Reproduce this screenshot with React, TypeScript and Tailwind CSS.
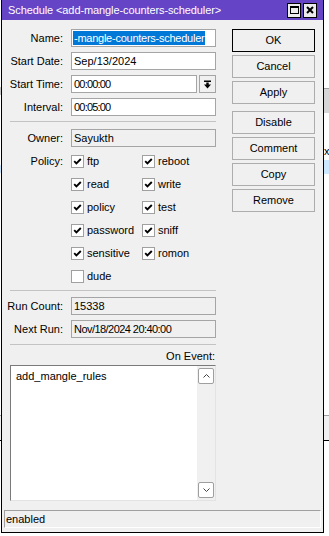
const font = { fontFamily: '"Liberation Sans", Arial, sans-serif' };

const Field = ({ value, readOnly = false, className = "" }: { value: string; readOnly?: boolean; className?: string }) => (
  <div
    className={`h-[18px] flex items-center px-[2px] border border-[#a5a5a5] text-[11px] text-black overflow-hidden whitespace-nowrap ${
      readOnly ? "bg-[#f0f0f0]" : "bg-white"
    } ${className}`}
  >
    {value}
  </div>
);

const Row = ({ label, children, className = "" }: { label: string; children: React.ReactNode; className?: string }) => (
  <div className={`flex items-center ${className}`}>
    <div className="w-[60px] text-right text-[11px] text-black pr-[1px]">{label}</div>
    <div className="ml-[7px] w-[145px]">{children}</div>
  </div>
);

const Check = ({ label, checked = true }: { label: string; checked?: boolean }) => (
  <div className="flex items-center h-[23px]">
    <div className="w-[13px] h-[13px] border border-[#a0a0a0] bg-white flex items-center justify-center">
      {checked && (
        <svg width="9" height="9" viewBox="0 0 9 9">
          <path d="M1.2 4.2 L3.4 6.4 L7.8 2" fill="none" stroke="#000" strokeWidth="1.9" />
        </svg>
      )}
    </div>
    <span className="ml-[3px] text-[11px] text-black">{label}</span>
  </div>
);

const Btn = ({ label, primary = false }: { label: string; primary?: boolean }) => (
  <div
    className={`h-[23px] w-[83px] flex items-center justify-center text-[11px] text-black bg-[#f0f0f0] border ${
      primary ? "border-black" : "border-[#adadad]"
    }`}
  >
    {label}
  </div>
);

const Sep = ({ className = "" }: { className?: string }) => (
  <div className={`ml-[6px] w-[206px] h-px bg-[#c3c3c3] ${className}`} />
);

export default function App() {
  return (
    <div className="flex w-[329px] h-[536px] bg-white overflow-hidden" style={font}>
      <div className="w-[1px] relative">
        <div className="absolute top-[87px] left-0 w-[1px] h-[8px] bg-[#c8c8c8]" />
        <div className="absolute top-[165px] left-0 w-[1px] h-[8px] bg-[#cce8ff]" />
        <div className="absolute top-[415px] left-0 w-[1px] h-[26px] border-t border-[#a0a0a0] border-b-black border-b bg-[#f0f0f0]" />
      </div>

      <div className="w-[323px] h-[533px] border-l border-r border-b border-black flex flex-col bg-[#f0f0f0]">
        <div className="h-[20px] bg-[#6544c6] flex items-center pl-[6px] pr-[6px]">
          <span className="text-white text-[11px] tracking-[-0.1px] whitespace-nowrap">Schedule &lt;add-mangle-counters-scheduler&gt;</span>
          <div className="ml-auto flex gap-[2px]">
            <div className="w-[14px] h-[15px] bg-[#ececec] border border-black flex items-center justify-center">
              <div className="w-[9px] h-[8px] border border-black border-t-2" />
            </div>
            <div className="w-[14px] h-[15px] bg-[#ececec] border border-black flex items-center justify-center">
              <svg width="8" height="8" viewBox="0 0 8 8">
                <path d="M1 1 L7 7 M7 1 L1 7" stroke="#000" strokeWidth="2" />
              </svg>
            </div>
          </div>
        </div>

        <div className="flex pt-[9px] pl-[2px]">
          <div className="w-[214px] flex flex-col">
            <Row label="Name:">
              <div className="h-[18px] flex items-center px-[1px] border border-[#a5a5a5] bg-white overflow-hidden whitespace-nowrap">
                <span className="bg-[#0078d7] text-white text-[11px] tracking-[-0.25px] leading-[14px] px-[1px]">-mangle-counters-scheduler</span>
              </div>
            </Row>
            <Row label="Start Date:" className="mt-[5px]">
              <Field value="Sep/13/2024" />
            </Row>
            <Row label="Start Time:" className="mt-[5px]">
              <div className="flex gap-[2px]">
                <Field value="00:00:00" className="flex-1 tracking-[-0.8px]" />
                <div className="w-[17px] h-[18px] border border-[#a5a5a5] bg-[#f0f0f0] flex items-center justify-center">
                  <svg width="9" height="9" viewBox="0 0 9 9">
                    <rect x="1" y="0.5" width="7" height="1.5" fill="#000" />
                    <rect x="3.3" y="2.5" width="2.4" height="2.5" fill="#000" />
                    <path d="M1 4.5 H8 L4.5 8.5 Z" fill="#000" />
                  </svg>
                </div>
              </div>
            </Row>
            <Row label="Interval:" className="mt-[5px]">
              <Field value="00:05:00" className="tracking-[-0.8px]" />
            </Row>
            <Sep className="mt-[5px]" />
            <Row label="Owner:" className="mt-[7px]">
              <Field value="Sayukth" readOnly />
            </Row>

            <div className="flex mt-[3px]">
              <div className="w-[60px] text-right text-[11px] text-black pr-[1px] h-[23px] leading-[23px]">Policy:</div>
              <div className="ml-[7px] grid grid-cols-[71px_1fr] w-[145px]">
                <Check label="ftp" />
                <Check label="reboot" />
                <Check label="read" />
                <Check label="write" />
                <Check label="policy" />
                <Check label="test" />
                <Check label="password" />
                <Check label="sniff" />
                <Check label="sensitive" />
                <Check label="romon" />
                <Check label="dude" checked={false} />
              </div>
            </div>

            <Sep className="mt-[2px]" />
            <Row label="Run Count:" className="mt-[6px]">
              <Field value="15338" readOnly />
            </Row>
            <Row label="Next Run:" className="mt-[5px]">
              <Field value="Nov/18/2024 20:40:00" readOnly className="tracking-[-0.55px]" />
            </Row>
            <Sep className="mt-[6px]" />
            <div className="mt-[4px] h-[14px] flex items-center justify-end pr-[1px] text-[11px] text-black w-[212px]">
              On Event:
            </div>
            <div className="mt-[2px] ml-[6px] w-[206px] h-[136px] flex bg-white border-t border-l border-[#7a7a7a] border-r border-r-[#e3e3e3] border-b border-b-[#e3e3e3]">
              <div className="flex-1 pl-[5px] pt-[2px] text-[11px] text-black">add_mangle_rules</div>
              <div className="w-[18px] bg-[#f0f0f0] flex flex-col justify-between items-center py-[2px]">
                <div className="w-[16px] h-[16px] border border-[#9f9f9f] rounded-[2px] bg-white flex items-center justify-center">
                  <svg width="9" height="6" viewBox="0 0 9 6">
                    <path d="M1.5 4.5 L4.5 1.5 L7.5 4.5" fill="none" stroke="#444" strokeWidth="1" />
                  </svg>
                </div>
                <div className="w-[16px] h-[16px] border border-[#9f9f9f] rounded-[2px] bg-white flex items-center justify-center">
                  <svg width="9" height="6" viewBox="0 0 9 6">
                    <path d="M1.5 1.5 L4.5 4.5 L7.5 1.5" fill="none" stroke="#444" strokeWidth="1" />
                  </svg>
                </div>
              </div>
            </div>
          </div>

          <div className="ml-[14px] flex flex-col gap-[3px]">
            <Btn label="OK" primary />
            <Btn label="Cancel" />
            <Btn label="Apply" />
            <div className="h-px" />
            <Btn label="Disable" />
            <Btn label="Comment" />
            <Btn label="Copy" />
            <Btn label="Remove" />
          </div>
        </div>

        <div className="mt-auto mb-[4px] mx-[2px] h-[18px] flex items-center pl-[1px] text-[11px] text-black border-t border-l border-[#a0a0a0] border-r border-r-white border-b border-b-white">
          enabled
        </div>
      </div>

      <div className="flex-1 relative">
        <div className="absolute top-[88px] left-0 right-0 h-[25px] bg-[#d6d6d6] border-t border-[#a0a0a0]" />
        <div className="absolute top-[145px] left-0 text-[11px] text-black leading-[12px]">x</div>
        <div className="absolute top-[160px] left-0 right-0 h-[14px] bg-[#cce8ff]" />
        <div className="absolute top-[415px] left-0 right-0 h-[26px] bg-[#f0f0f0] border-t border-[#a0a0a0] border-b border-b-black" />
      </div>
    </div>
  );
}
